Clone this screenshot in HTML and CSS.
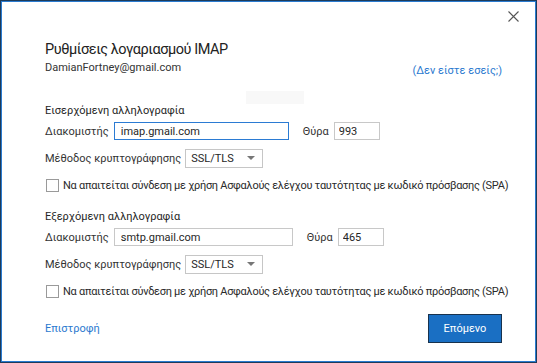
FILE: index.html
```html
<!DOCTYPE html>
<html lang="el">
<head>
    <meta charset="UTF-8">
    <title>Ρυθμίσεις λογαριασμού IMAP</title>
    <link rel="stylesheet" href="styles.css">
</head>
<body>

<div class="dialog">
    <div class="topbar">
        <button class="close-btn" title="Κλείσιμο">
            <svg width="11" height="11" viewBox="0 0 11 11"><path d="M0.5 0.5 L10.5 10.5 M10.5 0.5 L0.5 10.5" stroke="#555" stroke-width="1.1" fill="none"/></svg>
        </button>
    </div>

    <h1 class="title">Ρυθμίσεις λογαριασμού IMAP</h1>
    <div class="account">
        <span class="email">DamianFortney@gmail.com</span>
        <a href="#" class="link not-you">(Δεν είστε εσείς;)</a>
    </div>
    <div class="ghost"></div>

    <!-- Εισερχόμενη -->
    <div class="section-label first">Εισερχόμενη αλληλογραφία</div>
    <div class="row server-row">
        <label class="lbl">Διακομιστής</label>
        <input type="text" class="field server focused" value="imap.gmail.com">
        <label class="lbl port-lbl">Θύρα</label>
        <input type="text" class="field port" value="993">
    </div>
    <div class="row method-row">
        <label class="lbl">Μέθοδος κρυπτογράφησης</label>
        <div class="select"><span>SSL/TLS</span><i class="arrow"></i></div>
    </div>
    <div class="row check-row">
        <span class="checkbox"></span>
        <span class="check-text">Να απαιτείται σύνδεση με χρήση Ασφαλούς ελέγχου ταυτότητας με κωδικό πρόσβασης (SPA)</span>
    </div>

    <!-- Εξερχόμενη -->
    <div class="section-label second">Εξερχόμενη αλληλογραφία</div>
    <div class="row server-row">
        <label class="lbl">Διακομιστής</label>
        <input type="text" class="field server wide" value="smtp.gmail.com">
        <label class="lbl port-lbl">Θύρα</label>
        <input type="text" class="field port" value="465">
    </div>
    <div class="row method-row">
        <label class="lbl">Μέθοδος κρυπτογράφησης</label>
        <div class="select"><span>SSL/TLS</span><i class="arrow"></i></div>
    </div>
    <div class="row check-row">
        <span class="checkbox"></span>
        <span class="check-text">Να απαιτείται σύνδεση με χρήση Ασφαλούς ελέγχου ταυτότητας με κωδικό πρόσβασης (SPA)</span>
    </div>

    <div class="footer">
        <a href="#" class="link">Επιστροφή</a>
        <button class="next-btn">Επόμενο</button>
    </div>
</div>

</body>
</html>
```

FILE: styles.css
```css
body {
    margin: 0;
    font-family: Roboto, 'Noto Sans', sans-serif;
    font-size: 11px;
    color: #262626;
    background: #ffffff;
}
.dialog {
    width: 537px;
    height: 363px;
    box-sizing: border-box;
    border: 1px solid #1d3b5a;
    box-shadow: inset 0 0 0 1px #2a7bd0;
    padding: 0 34px 0 44px;
    display: flex;
    flex-direction: column;
    position: relative;
}
.topbar {
    height: 31px;
    display: flex;
    justify-content: flex-end;
    align-items: center;
}
.close-btn {
    background: none;
    border: none;
    padding: 0;
    width: 11px;
    height: 11px;
    margin-right: -17px;
    cursor: pointer;
}
.close-btn svg {
    display: block;
}
.title {
    margin: 8px 0 0;
    font-size: 14.5px;
    letter-spacing: -0.45px;
    font-weight: normal;
    line-height: 20px;
    color: #222;
}
.account {
    display: flex;
    justify-content: space-between;
    align-items: flex-start;
    line-height: 16px;
}
.email {
    color: #333;
}
.link {
    color: #2b79cf;
    text-decoration: none;
}
.not-you {
    margin-top: 3px;
}
.ghost {
    position: absolute;
    left: 245px;
    top: 90px;
    width: 58px;
    height: 13px;
    background: #f8f8f8;
}
.section-label {
    line-height: 16px;
}
.section-label.first {
    margin-top: 24px;
}
.section-label.second {
    margin-top: 16px;
}
.row {
    display: flex;
    align-items: center;
    white-space: nowrap;
}
.server-row {
    height: 20px;
    margin-top: 2px;
}
.method-row {
    height: 20px;
    margin-top: 7px;
}
.check-row {
    height: 16px;
    margin-top: 9px;
}
.lbl {
    color: #333;
}
.field {
    box-sizing: border-box;
    height: 18px;
    border: 1px solid #c8c8c8;
    font-family: inherit;
    font-size: 11px;
    color: #262626;
    padding: 0 6px;
    outline: none;
}
.server {
    width: 175px;
    margin-left: 5px;
}
.server.wide {
    width: 179px;
}
.server.focused {
    border-color: #2b7bd3;
}
.port-lbl {
    margin-left: 14px;
}
.port {
    width: 46px;
    margin-left: 5px;
    padding: 0 4px;
}
.select {
    box-sizing: border-box;
    width: 78px;
    height: 19px;
    margin-left: 4px;
    border: 1px solid #c6c6c6;
    display: flex;
    align-items: center;
    justify-content: space-between;
    padding: 0 7px 0 5px;
}
.arrow {
    width: 0;
    height: 0;
    border-left: 4px solid transparent;
    border-right: 4px solid transparent;
    border-top: 4px solid #777;
}
.checkbox {
    flex-shrink: 0;
    box-sizing: border-box;
    width: 13px;
    height: 13px;
    border: 1px solid #9a9a9a;
    margin: 0 4px 0 1px;
}
.check-text {
    color: #2a2a2a;
    letter-spacing: -0.28px;
}
.footer {
    margin-top: 15px;
    display: flex;
    justify-content: space-between;
    align-items: center;
}
.next-btn {
    width: 74px;
    height: 29px;
    background: #1a6fc3;
    border: 1px solid #18324d;
    color: #ffffff;
    font-family: inherit;
    font-size: 11px;
    cursor: pointer;
}
```
